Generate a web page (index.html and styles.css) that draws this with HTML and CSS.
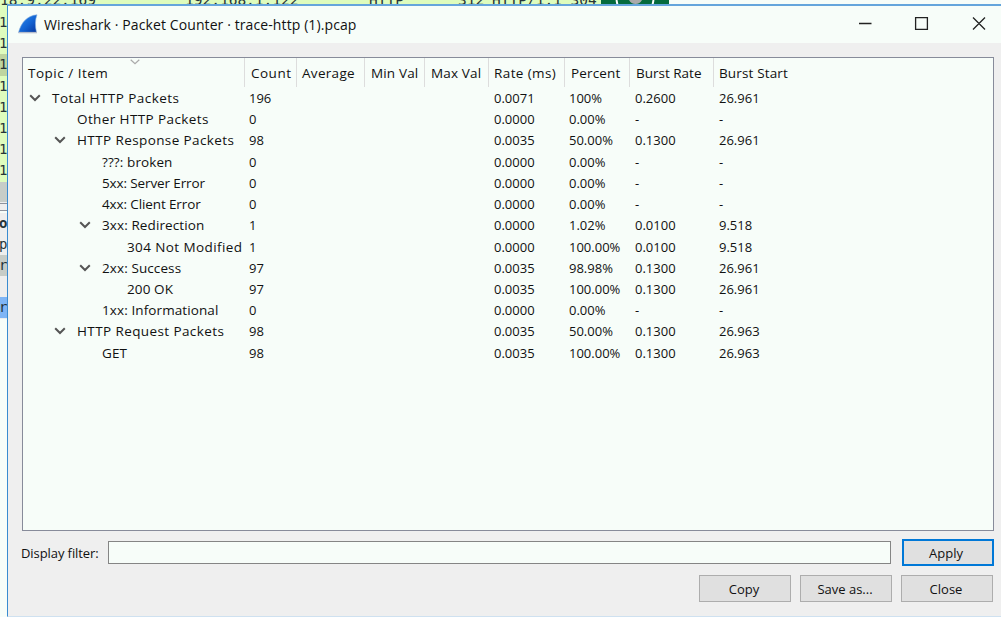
FILE: index.html
```
<!DOCTYPE html>
<html lang="en">
<head>
<meta charset="utf-8">
<title>Wireshark · Packet Counter · trace-http (1).pcap</title>
<link rel="stylesheet" href="styles.css">
</head>
<body>
<div class="desktop">
  <div class="backdrop">
    <div class="packet-top"><span class="p1">18.9.22.169</span><span class="p2">192.168.1.122</span><span class="p3">HTTP</span><span class="p4">312</span><span class="p5">HTTP/1.1 304</span></div>
    <svg class="banner" width="68" height="5" viewBox="0 0 68 5"><path fill="#056b3d" d="M0 0h68v5H0z"/><path d="M15.500 0l1 5M52.500 0l-1 5" stroke="#fff" stroke-width="2"/><path d="M28 0h13q-2 4-6.500 4T28 0z" fill="#aaa"/></svg>
    <div class="packet-edge"><i>1</i><i>1</i><i class="dark">1</i><i>1</i><i>1</i><i>1</i><i>1</i><i>1</i></div>
    <div class="scroll-edge"></div>
    <div class="detail-edge"><b>o</b><i>p</i><i class="grey">r</i><i></i><i class="blue">r</i></div>
  </div>
  <main class="dialog">
    <header class="titlebar">
      <svg class="fin" width="20" height="20" viewBox="0 0 20 20"><defs><linearGradient id="g" x1="0" y1="0" x2="1" y2="1"><stop offset="0" stop-color="#2d8df0"/><stop offset=".55" stop-color="#1263d2"/><stop offset="1" stop-color="#06359b"/></linearGradient></defs><path d="M.5 18.500C3 9 9 1.500 19 .8c-2 5-2 11-.5 17.700z" fill="url(#g)" stroke="#8ab0dd" stroke-width=".6"/><path d="M.5 18.600h18.500" stroke="#b6bdcc" stroke-width="1.400"/></svg>
      <h1>Wireshark · Packet Counter · trace-http (1).pcap</h1>
      <svg class="controls" width="130" height="16" viewBox="0 0 130 16" fill="none" stroke="#222" stroke-width="1.300"><path d="M0 8.500h12.500M56.600 2.600h11.800v11.800H56.600zM114 2.500l12 12M126 2.500l-12 12"/></svg>
    </header>
    <section class="tree">
      <svg class="sort" width="10" height="6" viewBox="0 0 10 6" fill="none" stroke="#aaa" stroke-width="1.200"><path d="M.7.7L5 4.700 9.300.7"/></svg>
      <div class="row head"><span>Topic / Item</span><span>Count</span><span>Average</span><span>Min Val</span><span>Max Val</span><span>Rate (ms)</span><span>Percent</span><span>Burst Rate</span><span>Burst Start</span></div>
      <div class="row"><span class="l0"><svg class="chev" viewBox="0 0 12 8"><path d="M1.200 1.300L6 6l4.800-4.700"/></svg>Total HTTP Packets</span><span>196</span><span></span><span></span><span></span><span>0.0071</span><span>100%</span><span>0.2600</span><span>26.961</span></div>
      <div class="row"><span class="l1">Other HTTP Packets</span><span>0</span><span></span><span></span><span></span><span>0.0000</span><span>0.00%</span><span>-</span><span>-</span></div>
      <div class="row"><span class="l1"><svg class="chev" viewBox="0 0 12 8"><path d="M1.200 1.300L6 6l4.800-4.700"/></svg>HTTP Response Packets</span><span>98</span><span></span><span></span><span></span><span>0.0035</span><span>50.00%</span><span>0.1300</span><span>26.961</span></div>
      <div class="row"><span class="l2">???: broken</span><span>0</span><span></span><span></span><span></span><span>0.0000</span><span>0.00%</span><span>-</span><span>-</span></div>
      <div class="row"><span class="l2 tight">5xx: Server Error</span><span>0</span><span></span><span></span><span></span><span>0.0000</span><span>0.00%</span><span>-</span><span>-</span></div>
      <div class="row"><span class="l2 tight">4xx: Client Error</span><span>0</span><span></span><span></span><span></span><span>0.0000</span><span>0.00%</span><span>-</span><span>-</span></div>
      <div class="row"><span class="l2"><svg class="chev" viewBox="0 0 12 8"><path d="M1.200 1.300L6 6l4.800-4.700"/></svg>3xx: Redirection</span><span>1</span><span></span><span></span><span></span><span>0.0000</span><span>1.02%</span><span>0.0100</span><span>9.518</span></div>
      <div class="row"><span class="l3 wide">304 Not Modified</span><span>1</span><span></span><span></span><span></span><span>0.0000</span><span>100.00%</span><span>0.0100</span><span>9.518</span></div>
      <div class="row"><span class="l2"><svg class="chev" viewBox="0 0 12 8"><path d="M1.200 1.300L6 6l4.800-4.700"/></svg>2xx: Success</span><span>97</span><span></span><span></span><span></span><span>0.0035</span><span>98.98%</span><span>0.1300</span><span>26.961</span></div>
      <div class="row"><span class="l3">200 OK</span><span>97</span><span></span><span></span><span></span><span>0.0035</span><span>100.00%</span><span>0.1300</span><span>26.961</span></div>
      <div class="row"><span class="l2">1xx: Informational</span><span>0</span><span></span><span></span><span></span><span>0.0000</span><span>0.00%</span><span>-</span><span>-</span></div>
      <div class="row"><span class="l1"><svg class="chev" viewBox="0 0 12 8"><path d="M1.200 1.300L6 6l4.800-4.700"/></svg>HTTP Request Packets</span><span>98</span><span></span><span></span><span></span><span>0.0035</span><span>50.00%</span><span>0.1300</span><span>26.963</span></div>
      <div class="row"><span class="l2">GET</span><span>98</span><span></span><span></span><span></span><span>0.0035</span><span>100.00%</span><span>0.1300</span><span>26.963</span></div>
    </section>
    <div class="filter"><label for="f">Display filter:</label><input id="f" type="text"><button class="primary">Apply</button></div>
    <div class="actions"><button>Copy</button><button>Save as...</button><button>Close</button></div>
  </main>
</div>
</body>
</html>
```
FILE: styles.css
```
* { box-sizing: border-box; }
body { margin: 0; font-family: "Open Sans", "Noto Sans", sans-serif; font-size: 13px; color: #111; }
.desktop { position: relative; width: 1001px; height: 617px; overflow: hidden; background: #f7fdf9; }
.backdrop { display: flex; flex-direction: column; height: 617px; color: #263438; }
.packet-top { display: grid; grid-template-columns: 185px 184px 89px 34px 1fr; width: 601px; height: 12px; flex: none; background: #defcbd; font: 14.500px/12px "DejaVu Sans Mono", monospace; letter-spacing: 0; white-space: pre; }
.packet-top span { margin-top: -6px; }
.banner { position: absolute; left: 601px; top: 0; }
.packet-edge { width: 8px; background: #defcbd; font: 14px/21.200px "DejaVu Sans Mono", monospace; }
.packet-edge i, .detail-edge i, .detail-edge b { display: block; height: 21.200px; margin-left: -1px; font-style: normal; overflow: hidden; }
.packet-edge .dark { background: #bed59f; }
.scroll-edge { width: 8px; height: 29px; flex: none; background: linear-gradient(#c7cdc8 20px, #eee 20px 21px, #8e929c 21px 22px, #eee 22px 28px, #8e929c 28px); }
.detail-edge { width: 8px; height: 106px; margin-top: 2px; background: #eee; font: 14px/21.200px "DejaVu Sans Mono", monospace; }
.detail-edge .grey { background: #c7ccc7; }
.detail-edge .blue { background: #80b5f5; }
.dialog { position: absolute; left: 7px; top: 4px; width: 1000px; height: 613px; border: 1px solid #398bd0; border-top: 2px solid #65a5dc; border-bottom: 1px solid #cfe1f0; background: #efefef; }
.titlebar { display: flex; align-items: center; height: 37px; background: #f7fdf9; padding-left: 10px; }
.fin { margin-top: -2px; }
h1 { margin: -1px 0 0 6px; font-size: 14px; font-weight: 400; width: 815px; letter-spacing: .1px; white-space: nowrap; }
.controls { margin-top: -3px; }
.tree { position: relative; margin: 14px 0 0 14px; width: 972px; height: 474px; border: 1.500px solid #878b9a; background: #f7fdf9; }
.sort { position: absolute; left: 107px; top: 1px; }
.row { display: grid; grid-template-columns: 222px 52px 68px 60px 64px 76px 65px 84px 1fr; height: 21.230px; line-height: 21px; white-space: nowrap; }
.row span { position: relative; padding-left: 4px; }
.row span:nth-child(6), .row span:nth-child(8), .row span:nth-child(9) { padding-left: 5px; }
.row.head { height: 30px; line-height: 30px; font-size: 13.500px; letter-spacing: .15px; }
.row.head span { height: 29px; border-right: 1px solid #ddd; padding-left: 6px; }
.row.head span:first-child { padding-left: 5px; letter-spacing: .5px; }
.row.head span:nth-child(2) { letter-spacing: .5px; }
.row.head span:nth-child(3) { padding-left: 5px; letter-spacing: .3px; }
.row.head span:nth-child(6) { padding-left: 5px; letter-spacing: .4px; }
.row.head span:nth-child(8) { letter-spacing: 0; }
.row.head span:last-child { padding-left: 5px; border: 0; }
.row .l0, .row .l1, .row .l2, .row .l3 { font-size: 13.500px; }
.row .l0 { padding-left: 29px; letter-spacing: .45px; }
.row .l1 { padding-left: 54px; letter-spacing: .4px; }
.row .l2 { padding-left: 79px; letter-spacing: .1px; }
.row .l3 { padding-left: 104px; letter-spacing: .1px; }
.row .tight { letter-spacing: -.12px; }
.row .wide { letter-spacing: .4px; }
.chev { position: absolute; top: 6px; width: 12px; height: 8px; margin-left: -23px; fill: none; stroke: #555; stroke-width: 2; }
.filter { display: flex; align-items: center; height: 27px; margin: 8px 0 0 13px; }
label { width: 87px; font-size: 13px; letter-spacing: -.08px; white-space: nowrap; }
input { width: 783px; height: 23px; border: 1.500px solid #858585; background: #f7fdf9; margin: 0 11px 0 0; }
button { width: 92px; height: 27px; border: 1px solid #adadad; background: #e0e0e0; font: 13px "Open Sans", sans-serif; color: #111; padding: 0 2px 0 0; }
button.primary { padding-right: 4px; border: 2px solid #0078d7; }
.actions { display: flex; gap: 9px; margin: 9px 0 0 691px; }
```
